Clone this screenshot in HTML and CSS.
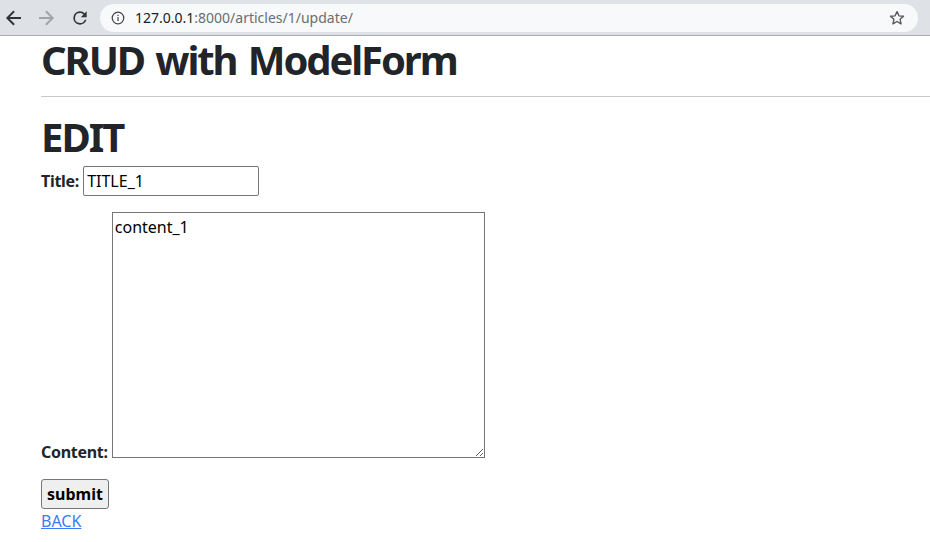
FILE: index.html
```html
<!DOCTYPE html>
<html>
<head>
<meta charset="utf-8">
<link rel="stylesheet" href="styles.css">
</head>
<body>
<div class="chrome">
  <div class="nav">
    <svg class="navicon" viewBox="0 0 16 16" width="16" height="16"><path d="M15 7H3.8l5-5L7.4.6 0 8l7.4 7.4 1.4-1.4-5-5H15z" fill="#333"/></svg>
    <svg class="navicon" viewBox="0 0 16 16" width="16" height="16"><path d="M1 7h11.2l-5-5L8.6.6 16 8l-7.4 7.4L7.2 14l5-5H1z" fill="#a0a3a8"/></svg>
    <svg class="navicon" viewBox="0 0 24 24" width="20" height="20"><path d="M17.65 6.35A7.96 7.96 0 0 0 12 4a8 8 0 1 0 7.73 10h-2.08A6 6 0 1 1 12 6c1.66 0 3.14.69 4.22 1.78L13 11h7V4l-2.35 2.35z" fill="#333"/></svg>
  </div>
  <div class="omnibox">
    <svg class="info" viewBox="0 0 16 16" width="14" height="14"><circle cx="8" cy="8" r="6.6" fill="none" stroke="#444" stroke-width="1.4"/><rect x="7.3" y="7" width="1.4" height="4.5" fill="#444"/><rect x="7.3" y="4.3" width="1.4" height="1.5" fill="#444"/></svg>
    <span class="url"><span class="host">127.0.0.1</span>:8000/articles/1/update/</span>
    <svg class="star" viewBox="0 0 24 24" width="18" height="18"><path d="M12 3.5l2.6 5.6 6.1.6-4.6 4.1 1.3 6-5.4-3.1-5.4 3.1 1.3-6-4.6-4.1 6.1-.6z" fill="none" stroke="#555" stroke-width="1.8" stroke-linejoin="round"/></svg>
  </div>
</div>
<div class="page">
  <h1 class="title">CRUD with ModelForm</h1>
  <hr class="rule">
  <h1 class="edit">EDIT</h1>
  <form class="form">
    <p class="row"><label class="lbl">Title:</label> <input class="inp" type="text" value="TITLE_1"></p>
    <p class="row"><label class="lbl">Content:</label> <textarea class="ta">content_1</textarea></p>
    <button class="btn" type="button">submit</button>
  </form>
  <a class="back" href="#">BACK</a>
</div>
</body>
</html>
```
FILE: styles.css
```css
* { box-sizing: border-box; }
html, body { margin: 0; padding: 0; background: #fff; }
body { font-family: "Noto Sans", "Open Sans", sans-serif; color: #212529; font-size: 16px; }
.chrome {
  height: 36px;
  background: #dee1e6;
  border-bottom: 1px solid #a9abaf;
  display: flex;
  align-items: center;
  padding: 0 12px 0 6px;
}
.nav { display: flex; align-items: center; gap: 16px; width: 94px; }
.navicon { display: block; }
.omnibox {
  flex: 1;
  height: 28px;
  background: #f8f9fa;
  border-radius: 14px;
  display: flex;
  align-items: center;
  padding: 0 12px 0 11px;
}
.info { margin-right: 10px; }
.url { font-family: "Noto Sans", sans-serif; font-size: 14px; color: #6a6d71; flex: 1; }
.host { color: #202124; }
.star { display: block; }
.page { padding-left: 41px; }
.title { font-size: 40px; font-weight: 700; line-height: 48px; margin: 0; letter-spacing: -2.1px; word-spacing: 3px; }
.rule { border: 0; border-top: 1px solid #c8c8c8; margin: 12px 0 16px; }
.edit { font-size: 40px; font-weight: 700; line-height: 48px; margin: 0 0 5px; letter-spacing: -2px; }
.form { margin: 0; }
.row { margin: 0 0 16px; }
.lbl { font-weight: 700; letter-spacing: -0.3px; }
.inp {
  font-family: inherit; font-size: 16px; color: #000;
  width: 176px; height: 30px; border: 1px solid #767676; border-radius: 2px; padding: 1px 3px;
}
.ta {
  font-family: inherit; font-size: 16px; color: #000;
  width: 373px; height: 246px; border: 1px solid #767676; padding: 3px 2px; resize: both; vertical-align: baseline;
}
.btn {
  display: block;
  font-family: inherit; font-weight: 700; font-size: 16px; color: #000;
  width: 68px; height: 30px; background: #efefef; border: 1px solid #767676; border-radius: 3px; padding: 0;
  margin-top: 10px;
}
.back { color: #3b7bf7; font-size: 16px; text-decoration: underline; display: inline-block; line-height: 24px; }
```
